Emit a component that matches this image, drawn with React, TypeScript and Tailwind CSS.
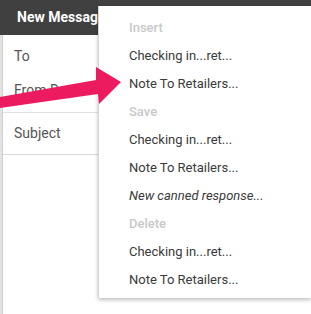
import React from "react";

const groups = [
  { title: "Insert", items: ["Checking in...ret...", "Note To Retailers..."] },
  {
    title: "Save",
    items: ["Checking in...ret...", "Note To Retailers..."],
    extra: "New canned response...",
  },
  { title: "Delete", items: ["Checking in...ret...", "Note To Retailers..."] },
];

function Arrow() {
  return (
    <svg
      className="absolute left-0 top-0 pointer-events-none"
      width="130"
      height="120"
      viewBox="0 0 130 120"
    >
      <polygon
        points="0,97 96,80 96,67 121,82 99,104 98,94 0,108"
        fill="#ec1a5f"
      />
    </svg>
  );
}

export default function App() {
  return (
    <div
      className="relative w-[311px] h-[314px] overflow-hidden bg-white"
      style={{ fontFamily: "Roboto, Arial, sans-serif" }}
    >
      {/* compose window */}
      <div className="h-[35px] bg-[#404040] flex items-center pl-[17px]">
        <span className="text-white font-bold text-[14px]">New Message</span>
      </div>
      <div className="flex h-[279px]">
        <div className="w-[3px] bg-[#e2e2e2] border-r border-[#d0d0d0]" />
        <div className="w-[95px] flex flex-col text-[14px] text-[#555]">
          <div className="h-[43px] flex items-center pl-[11px]">To</div>
          <div className="h-[35px] pt-[2px] pl-[11px] border-b border-[#e0e0e0]">
            From D
          </div>
          <div className="h-[42px] flex items-center pl-[11px] border-b border-[#d8d8d8]">
            Subject
          </div>
        </div>
      </div>

      {/* canned responses menu */}
      <div className="absolute left-[98px] top-[6px] w-[213px] h-[292px] bg-white border-l border-[#d6d6d6] shadow-[0_2px_4px_rgba(0,0,0,0.25)] pt-[8px] text-[13px]">
        {groups.map((g) => (
          <div key={g.title}>
            <div className="h-[28px] flex items-center pl-[30px] text-[#c8c8c8] font-medium">
              {g.title}
            </div>
            {g.items.map((it, i) => (
              <div
                key={i}
                className="h-[28px] flex items-center pl-[30px] text-[#3a3a3a]"
              >
                {it}
              </div>
            ))}
            {g.extra && (
              <div className="h-[28px] flex items-center pl-[30px] text-[#3a3a3a] italic">
                {g.extra}
              </div>
            )}
          </div>
        ))}
      </div>

      <Arrow />
    </div>
  );
}
